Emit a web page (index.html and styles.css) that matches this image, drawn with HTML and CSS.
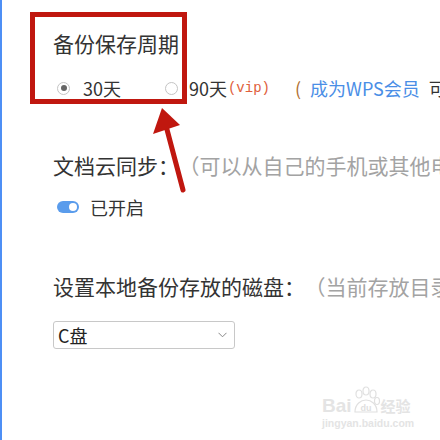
FILE: index.html
```html
<!DOCTYPE html>
<html lang="zh-CN">
<head>
<meta charset="utf-8">
<link rel="stylesheet" href="styles.css">
</head>
<body>
<div class="page">
  <section class="group">
    <div class="label">备份保存周期</div>
    <div class="radios">
      <label class="radio checked"><span class="dot"></span><span class="rtext">30天</span></label>
      <label class="radio"><span class="dot"></span><span class="rtext">90天</span><span class="vip">(vip)</span></label>
      <span class="note"><span class="paren">(</span><a class="link">成为WPS会员</a>可享受90天备份)</span>
    </div>
  </section>

  <section class="group sync">
    <div class="label">文档云同步：<span class="hint">（可以从自己的手机或其他电脑查看文档）</span></div>
    <div class="toggle-row">
      <span class="toggle"><span class="knob"></span></span>
      <span class="ttext">已开启</span>
    </div>
  </section>

  <section class="group disk">
    <div class="label">设置本地备份存放的磁盘：<span class="hint">（当前存放目录：C:\Users）</span></div>
    <div class="select">
      <span class="stext">C盘</span>
      <svg class="chev" width="9" height="6" viewBox="0 0 9 6"><path d="M0.5 0.8 L4.5 4.8 L8.5 0.8" fill="none" stroke="#888" stroke-width="1"/></svg>
    </div>
  </section>
</div>

<div class="highlight"></div>
<svg class="arrow" width="440" height="440" viewBox="0 0 440 440">
  <line x1="183" y1="190" x2="165" y2="122" stroke="#c0170f" stroke-width="5" stroke-linecap="round"/>
  <polygon points="162,108 153,134 180,125" fill="#c0170f"/>
</svg>

<div class="watermark">
  <div class="wm-top">
    <span class="wm-bai">Bai</span>
    <span class="wm-paw">
      <svg width="30" height="30" viewBox="0 0 30 30">
        <g fill="none" stroke="#e0e0e0" stroke-width="1.2">
          <ellipse cx="8" cy="8" rx="3" ry="4"/>
          <ellipse cx="15" cy="5" rx="3" ry="4"/>
          <ellipse cx="22" cy="8" rx="3" ry="4"/>
          <ellipse cx="26" cy="15" rx="2.5" ry="3.5"/>
          <path d="M4 26 C4 18 10 14 15 14 C20 14 26 18 26 26 Z"/>
        </g>
        <text x="15" y="25" font-size="9" text-anchor="middle" fill="#e0e0e0" font-family="Liberation Sans, sans-serif" font-weight="bold">du</text>
      </svg>
    </span>
    <span class="wm-jy">经验</span>
  </div>
  <div class="wm-url">jingyan.baidu.com</div>
</div>
</body>
</html>
```

FILE: styles.css
```css
html, body {
  margin: 0;
  padding: 0;
  background: #fff;
}
body {
  width: 440px;
  height: 440px;
  overflow: hidden;
  position: relative;
  font-family: "Noto Sans CJK SC", "Noto Sans", sans-serif;
  color: #333;
}
.page {
  height: 440px;
  box-sizing: border-box;
  border-left: 2px solid #4d8ff5;
  padding: 29px 0 0 51px;
  white-space: nowrap;
}
.label {
  font-size: 21px;
  line-height: 28px;
  color: #333;
}
.hint {
  color: #a3a3a3;
  margin-left: 10px;
}
.radios {
  display: flex;
  align-items: center;
  height: 28px;
  margin-top: 17px;
  font-size: 18px;
}
.radio {
  display: flex;
  align-items: center;
}
.dot {
  width: 11px;
  height: 11px;
  border: 1px solid #c4c4c4;
  border-radius: 50%;
  box-sizing: content-box;
  display: flex;
  align-items: center;
  justify-content: center;
  margin-left: 4px;
}
.radio.checked .dot::after {
  content: "";
  width: 6px;
  height: 6px;
  border-radius: 50%;
  background: #666;
}
.rtext {
  margin-left: 13px;
  color: #333;
}
.radio.checked {
  margin-right: 40px;
}
.radio:not(.checked) .rtext {
  margin-left: 11px;
}
.vip {
  font-family: "Liberation Mono", monospace;
  font-size: 14px;
  color: #e0603c;
  margin-left: 1px;
}
.note {
  margin-left: 25px;
  color: #333;
}
.paren {
  color: #b07030;
}
.link {
  color: #4a8ee6;
  margin: 0 9px 0 9px;
}
.sync {
  margin-top: 49px;
}
.toggle-row {
  display: flex;
  align-items: center;
  height: 28px;
  margin-top: 14px;
  font-size: 18px;
}
.toggle {
  width: 22px;
  height: 12px;
  border-radius: 6px;
  background: #5a9cec;
  display: flex;
  align-items: center;
  justify-content: flex-end;
  padding: 0 2px;
  box-sizing: border-box;
  margin-left: 4px;
}
.knob {
  width: 8px;
  height: 8px;
  border-radius: 50%;
  background: #fff;
}
.ttext {
  margin-left: 11px;
}
.disk {
  margin-top: 51px;
}
.select {
  margin-top: 21px;
  width: 182px;
  height: 28px;
  box-sizing: border-box;
  border: 1px solid #c8c8c8;
  border-radius: 3px;
  display: flex;
  align-items: center;
  justify-content: space-between;
  padding: 0 7px 0 4px;
  font-size: 18px;
  color: #222;
}
.highlight {
  position: absolute;
  left: 30px;
  top: 12px;
  width: 157px;
  height: 92px;
  box-sizing: border-box;
  border: 5px solid #c0170f;
}
.arrow {
  position: absolute;
  left: 0;
  top: 0;
}
.watermark {
  position: absolute;
  left: 322px;
  top: 380px;
  width: 92px;
  color: #e4e4e4;
}
.wm-top {
  display: flex;
  align-items: flex-end;
  height: 36px;
}
.wm-bai {
  font-family: "Liberation Sans", sans-serif;
  font-weight: bold;
  font-size: 19px;
  line-height: 20px;
}
.wm-paw {
  display: flex;
  margin-left: -1px;
}
.wm-jy {
  font-size: 15px;
  line-height: 20px;
  font-weight: bold;
}
.wm-url {
  font-family: "Liberation Sans", sans-serif;
  font-size: 10.5px;
  line-height: 12px;
  font-weight: bold;
  margin-top: 1px;
}
```
